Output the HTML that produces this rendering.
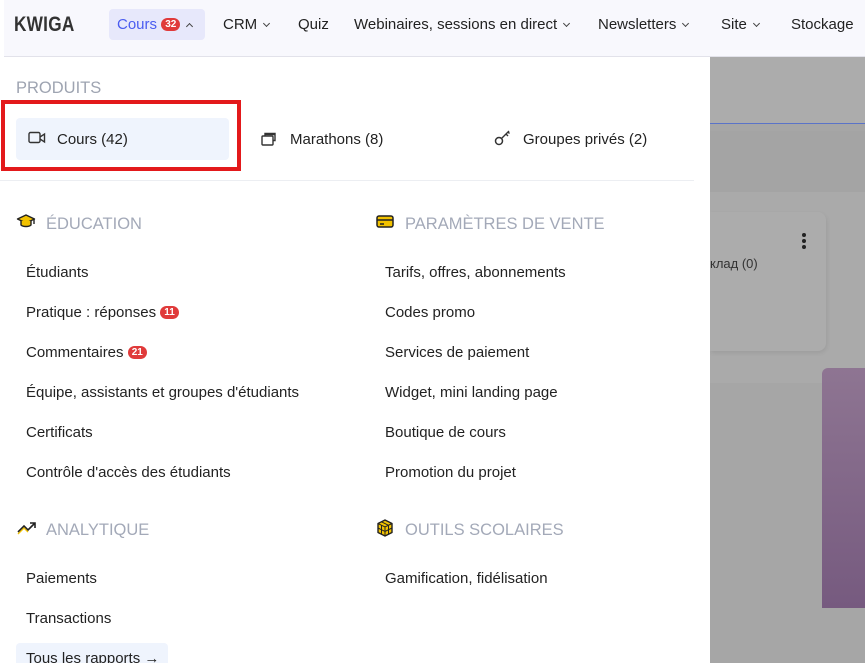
<!DOCTYPE html>
<html><head><meta charset="utf-8"><style>
*{margin:0;padding:0;box-sizing:border-box}
html,body{width:865px;height:663px;overflow:hidden}
body{background:#fff;font-family:"Liberation Sans",sans-serif;color:#222;position:relative}
.hdr{position:absolute;left:4px;top:0;width:861px;height:57px;background:#f8f8fd;border-bottom:1px solid #e2e2ea}
.logo{position:absolute;left:14px;top:13px;font-size:21px;font-weight:bold;color:#333;letter-spacing:0.3px;transform:scaleX(0.82);transform-origin:left}
.nav{position:absolute;top:16px;font-size:15px;color:#222;white-space:nowrap}
.chev{display:inline-block;width:5px;height:5px;border-right:1.3px solid #444;border-bottom:1.3px solid #444;transform:rotate(45deg);margin-left:7px;position:relative;top:-3px}
.active{position:absolute;left:109px;top:9px;width:96px;height:31px;background:#e7e8fb;border-radius:4px}
.badge{display:inline-block;background:#e03a3a;color:#fff;font-size:10px;font-weight:bold;border-radius:7px;padding:1px 4px;line-height:11px;vertical-align:2px}
.ov{position:absolute;left:710px;top:57px;width:155px;height:606px;background:#a6a6a6;overflow:hidden}
.t{position:absolute;font-size:15px;color:#222;white-space:nowrap}
.h{position:absolute;font-size:16.5px;color:#a3a9b8;white-space:nowrap}
</style></head><body>
<div class="hdr"></div>
<div class="logo">KWIGA</div>
<div class="active"></div>
<div class="nav" style="left:117px;color:#4a5cf0">Cours <span class="badge">32</span><span class="chev" style="transform:rotate(-135deg);top:0;border-color:#444"></span></div>
<div class="nav" style="left:223px">CRM<span class="chev"></span></div>
<div class="nav" style="left:298px">Quiz</div>
<div class="nav" style="left:354px">Webinaires, sessions en direct<span class="chev"></span></div>
<div class="nav" style="left:598px">Newsletters<span class="chev"></span></div>
<div class="nav" style="left:721px">Site<span class="chev"></span></div>
<div class="nav" style="left:791px">Stockage</div>

<div class="ov">
 <div style="position:absolute;left:0;top:0;width:155px;height:66px;background:#acacac"></div>
 <div style="position:absolute;left:0;top:66px;width:155px;height:1px;background:#5a73c8"></div>
 <div style="position:absolute;left:0;top:74px;width:155px;height:61px;background:#a4a4a4"></div>
 <div style="position:absolute;left:0;top:135px;width:155px;height:191px;background:#aaa"></div>
 <div style="position:absolute;left:0;top:155px;width:116px;height:139px;background:#acacac;border-radius:0 8px 8px 0;box-shadow:1px 2px 4px rgba(0,0,0,.08)"></div>
 <div style="position:absolute;left:0;top:199px;font-size:13px;color:#333">клад (0)</div>
 <div style="position:absolute;left:92px;top:176px;width:4px;height:4px;border-radius:2px;background:#222;box-shadow:0 6px 0 #222,0 12px 0 #222"></div>
 <div style="position:absolute;left:112px;top:311px;width:43px;height:240px;border-radius:6px 0 0 0;background:linear-gradient(#8e7592,#765a7f)"></div>
</div>

<div class="h" style="left:16px;top:79px;color:#9ea4b1">PRODUITS</div>
<div style="position:absolute;left:16px;top:118px;width:213px;height:42px;background:#eff4fd;border-radius:4px"></div>
<div style="position:absolute;left:1px;top:100px;width:240px;height:71px;border:4px solid #e3191b"></div>
<svg style="position:absolute;left:28px;top:131px" width="18" height="14" viewBox="0 0 18 14"><rect x="1" y="1.5" width="11" height="10" rx="1.5" fill="none" stroke="#333" stroke-width="1.4"/><path d="M12 6l4.5-3v8L12 8" fill="none" stroke="#333" stroke-width="1.4"/></svg>
<div class="t" style="left:57px;top:131px">Cours (42)</div>
<svg style="position:absolute;left:261px;top:130px" width="18" height="16" viewBox="0 0 18 16"><rect x="1" y="6" width="11" height="9" rx="1" fill="none" stroke="#333" stroke-width="1.4"/><path d="M4 6V3.5h10v7h-2M4 4.5h10" fill="none" stroke="#333" stroke-width="1.4"/></svg>
<div class="t" style="left:290px;top:131px">Marathons (8)</div>
<svg style="position:absolute;left:494px;top:129px" width="18" height="18" viewBox="0 0 18 18"><circle cx="5" cy="12" r="3.5" fill="none" stroke="#333" stroke-width="1.5"/><path d="M7.5 9.5L15 2M12 5l2 2M14 3l1.5 1.5" fill="none" stroke="#333" stroke-width="1.4"/></svg>
<div class="t" style="left:523px;top:131px">Groupes privés (2)</div>
<div style="position:absolute;left:0;top:180px;width:694px;height:1px;background:#eceef2"></div>

<svg style="position:absolute;left:16px;top:213px" width="20" height="16" viewBox="0 0 20 16"><path d="M10 2L1.5 6 10 10l8.5-4z" fill="#f2c200" stroke="#222" stroke-width="1.4" stroke-linejoin="round"/><path d="M5 8v4c2 2 8 2 10 0V8" fill="#f2c200" stroke="#222" stroke-width="1.4"/><path d="M18 6v5" stroke="#222" stroke-width="1.4"/></svg>
<div class="h" style="left:46px;top:215px">ÉDUCATION</div>
<div class="t" style="left:26px;top:264px">Étudiants</div>
<div class="t" style="left:26px;top:304px">Pratique : réponses <span class="badge">11</span></div>
<div class="t" style="left:26px;top:344px">Commentaires <span class="badge">21</span></div>
<div class="t" style="left:26px;top:384px">Équipe, assistants et groupes d'étudiants</div>
<div class="t" style="left:26px;top:424px">Certificats</div>
<div class="t" style="left:26px;top:464px">Contrôle d'accès des étudiants</div>

<svg style="position:absolute;left:17px;top:521px" width="20" height="14" viewBox="0 0 20 14"><path d="M1 11l6-6 4 4 7-7M13 2h5v5" fill="none" stroke="#222" stroke-width="1.6"/><path d="M1 13l6-6 4 4" fill="none" stroke="#f2c200" stroke-width="1.3"/></svg>
<div class="h" style="left:46px;top:521px">ANALYTIQUE</div>
<div class="t" style="left:26px;top:570px">Paiements</div>
<div class="t" style="left:26px;top:610px">Transactions</div>
<div style="position:absolute;left:16px;top:643px;width:152px;height:30px;background:#eff4fd;border-radius:4px"></div>
<div class="t" style="left:26px;top:650px">Tous les rapports →</div>

<svg style="position:absolute;left:376px;top:215px" width="18" height="14" viewBox="0 0 18 14"><rect x="1" y="1" width="16" height="11" rx="2" fill="#f2c200" stroke="#222" stroke-width="1.5"/><path d="M1 5h16M4 9h4" stroke="#222" stroke-width="1.5"/></svg>
<div class="h" style="left:405px;top:215px">PARAMÈTRES DE VENTE</div>
<div class="t" style="left:385px;top:264px">Tarifs, offres, abonnements</div>
<div class="t" style="left:385px;top:304px">Codes promo</div>
<div class="t" style="left:385px;top:344px">Services de paiement</div>
<div class="t" style="left:385px;top:384px">Widget, mini landing page</div>
<div class="t" style="left:385px;top:424px">Boutique de cours</div>
<div class="t" style="left:385px;top:464px">Promotion du projet</div>
<svg style="position:absolute;left:376px;top:519px" width="18" height="18" viewBox="0 0 18 18"><path d="M9 1l7 3.5v9L9 17l-7-3.5v-9z" fill="#f2c200" stroke="#222" stroke-width="1.4" stroke-linejoin="round"/><path d="M2 4.5L9 8l7-3.5M9 8v9M5.5 2.8l7 3.5M5.5 6.3v9M12.5 6.3v9M2 9l7 3.5L16 9" fill="none" stroke="#222" stroke-width="1"/></svg>
<div class="h" style="left:405px;top:521px">OUTILS SCOLAIRES</div>
<div class="t" style="left:385px;top:570px">Gamification, fidélisation</div>
</body></html>
